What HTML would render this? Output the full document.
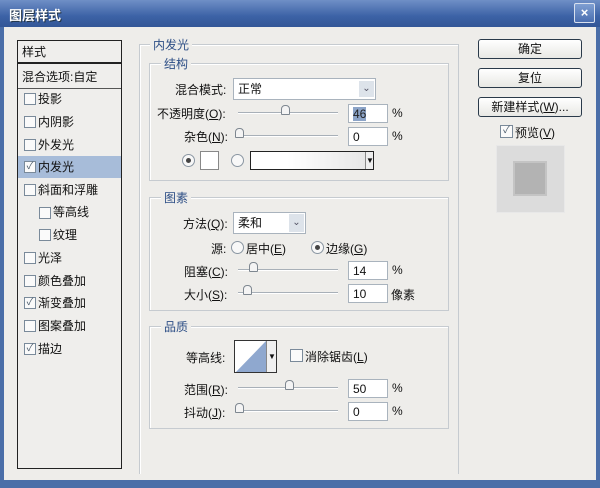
<!DOCTYPE html>
<html><head><meta charset="utf-8"><style>
*{box-sizing:border-box;margin:0;padding:0}
body{width:600px;height:488px;overflow:hidden;background:#4a6ea8;font-family:"Liberation Sans","Noto Sans CJK SC",sans-serif;font-size:12px;color:#111;position:relative}
.a{position:absolute;white-space:nowrap}
#title{left:0;top:0;width:600px;height:27px;background:linear-gradient(#6f8fc6,#3c62a6 60%,#335797)}
#body{left:4px;top:27px;width:592px;height:453px;background:#eeedea}
.cb{position:absolute;width:12px;height:12px;border:1px solid #7a8a9a;background:#fafafa;font-size:10px;line-height:10px;text-align:center;color:#4a5a6a}
.line{position:absolute;border:1px solid #c6cbd0;box-shadow:1px 1px 0 #fff inset}
.leg{position:absolute;background:#eeedea;padding:0 3px;color:#2e4f86;font-size:12px}
.inp{position:absolute;height:19px;border:1px solid #a9b3bd;background:#fff;padding:2px 4px;font-size:12px;line-height:14px}
.sl{position:absolute;height:2px;border-top:1px solid #a8b0b8;border-bottom:1px solid #fff}
.th{position:absolute;width:9px;height:10px;border:1px solid #7e8790;background:#f4f4f4;border-radius:4px 4px 1px 1px}
.rad{position:absolute;width:13px;height:13px;border:1px solid #8a96a2;border-radius:50%;background:#f8f8f8}
.rad.on:after{content:"";position:absolute;left:3px;top:3px;width:5px;height:5px;border-radius:50%;background:#444}
.btn{position:absolute;left:478px;width:104px;height:20px;border:1px solid #2a3a4a;border-radius:3px;background:linear-gradient(#fff,#e8e8e4);text-align:center;line-height:18px;font-size:12px}
.item{position:absolute;left:22px;font-size:12px}
.sep{position:absolute;left:18px;width:103px;height:1px;background:#dcdcdc}
</style></head><body>
<div id="title" class="a"></div>
<div class="a" style="left:9px;top:5px;color:#fff;font-weight:bold;font-size:13px;text-shadow:1px 1px 0 #234">图层样式</div>
<div class="a" style="left:574px;top:3px;width:21px;height:20px;border:1px solid #d8e0ee;border-radius:2px;background:linear-gradient(#7f9fd2,#4a6eb0);color:#fff;font-weight:bold;text-align:center;line-height:18px;font-size:13px">×</div>
<div id="body" class="a"></div>

<!-- left list -->
<div class="a" style="left:17px;top:40px;width:105px;height:429px;border:1px solid #222;background:#efeeec"></div>
<div class="a" style="left:18px;top:62px;width:103px;height:2px;background:#222"></div>
<div class="a" style="left:18px;top:88px;width:103px;height:1px;background:#555"></div>
<div class="a" style="left:18px;top:156px;width:103px;height:22px;background:#a7bcd9"></div>
<div class="item" style="top:43px">样式</div>
<div class="item" style="top:68px">混合选项:自定</div>
<div class="cb" style="left:24px;top:93px"></div><div class="item" style="left:38px;top:90px">投影</div>
<div class="cb" style="left:24px;top:116px"></div><div class="item" style="left:38px;top:113px">内阴影</div>
<div class="cb" style="left:24px;top:139px"></div><div class="item" style="left:38px;top:136px">外发光</div>
<div class="cb" style="left:24px;top:161px">✓</div><div class="item" style="left:38px;top:158px">内发光</div>
<div class="cb" style="left:24px;top:184px"></div><div class="item" style="left:38px;top:181px">斜面和浮雕</div>
<div class="cb" style="left:39px;top:207px"></div><div class="item" style="left:53px;top:203px">等高线</div>
<div class="cb" style="left:39px;top:229px"></div><div class="item" style="left:53px;top:226px">纹理</div>
<div class="cb" style="left:24px;top:252px"></div><div class="item" style="left:38px;top:249px">光泽</div>
<div class="cb" style="left:24px;top:275px"></div><div class="item" style="left:38px;top:272px">颜色叠加</div>
<div class="cb" style="left:24px;top:297px">✓</div><div class="item" style="left:38px;top:294px">渐变叠加</div>
<div class="cb" style="left:24px;top:320px"></div><div class="item" style="left:38px;top:317px">图案叠加</div>
<div class="cb" style="left:24px;top:343px">✓</div><div class="item" style="left:38px;top:340px">描边</div>

<!-- outer group -->
<div class="line" style="left:139px;top:44px;width:320px;height:430px;border-bottom:none"></div>
<div class="leg" style="left:150px;top:36px">内发光</div>
<!-- structure -->
<div class="line" style="left:149px;top:63px;width:300px;height:118px"></div>
<div class="leg" style="left:161px;top:55px">结构</div>
<div class="a" style="left:175px;top:81px">混合模式:</div>
<div class="inp" style="left:233px;top:78px;width:143px;height:22px;padding-top:3px">正常</div>
<div class="a" style="left:359px;top:81px;width:15px;height:16px;background:#dde3ea;color:#556;text-align:center;font-size:10px;line-height:16px">⌄</div>
<div class="a" style="left:157px;top:105px">不透明度(<u>O</u>):</div>
<div class="sl" style="left:238px;top:112px;width:100px"></div><div class="th" style="left:281px;top:105px"></div>
<div class="inp" style="left:348px;top:104px;width:40px"><span style="background:#8ca4c8;color:#222">46</span></div><div class="a" style="left:392px;top:106px">%</div>
<div class="a" style="left:184px;top:128px">杂色(<u>N</u>):</div>
<div class="sl" style="left:238px;top:135px;width:100px"></div><div class="th" style="left:235px;top:128px"></div>
<div class="inp" style="left:348px;top:127px;width:40px">0</div><div class="a" style="left:392px;top:129px">%</div>
<div class="rad on" style="left:182px;top:154px"></div>
<div class="a" style="left:200px;top:151px;width:19px;height:19px;border:1px solid #888;background:#fff"></div>
<div class="rad" style="left:231px;top:154px"></div>
<div class="a" style="left:250px;top:151px;width:124px;height:19px;border:1px solid #222;background:linear-gradient(90deg,#fff 30%,#e4e4e4)"></div>
<div class="a" style="left:365px;top:152px;width:8px;height:17px;background:#eee;border-left:1px solid #888;font-size:8px;text-align:center;line-height:17px">▼</div>
<!-- elements -->
<div class="line" style="left:149px;top:197px;width:300px;height:114px"></div>
<div class="leg" style="left:161px;top:189px">图素</div>
<div class="a" style="left:183px;top:215px">方法(<u>Q</u>):</div>
<div class="inp" style="left:233px;top:212px;width:73px;height:22px;padding-top:3px">柔和</div>
<div class="a" style="left:289px;top:214px;width:15px;height:18px;background:#dde3ea;color:#556;text-align:center;font-size:10px;line-height:18px">⌄</div>
<div class="a" style="left:211px;top:240px">源:</div>
<div class="rad" style="left:231px;top:241px"></div><div class="a" style="left:246px;top:240px">居中(<u>E</u>)</div>
<div class="rad on" style="left:311px;top:241px"></div><div class="a" style="left:326px;top:240px">边缘(<u>G</u>)</div>
<div class="a" style="left:184px;top:263px">阻塞(<u>C</u>):</div>
<div class="sl" style="left:238px;top:269px;width:100px"></div><div class="th" style="left:249px;top:262px"></div>
<div class="inp" style="left:348px;top:261px;width:40px">14</div><div class="a" style="left:392px;top:263px">%</div>
<div class="a" style="left:184px;top:286px">大小(<u>S</u>):</div>
<div class="sl" style="left:238px;top:292px;width:100px"></div><div class="th" style="left:243px;top:285px"></div>
<div class="inp" style="left:348px;top:284px;width:40px">10</div><div class="a" style="left:391px;top:286px">像素</div>
<!-- quality -->
<div class="line" style="left:149px;top:326px;width:300px;height:103px"></div>
<div class="leg" style="left:161px;top:318px">品质</div>
<div class="a" style="left:186px;top:349px">等高线:</div>
<div class="a" style="left:234px;top:340px;width:43px;height:33px;border:1px solid #333;background:#fff;overflow:hidden">
<svg width="43" height="33" style="position:absolute;left:0;top:0"><polygon points="0,32 31,0 31,32" fill="#8fa8cf"/></svg>
<div style="position:absolute;left:31px;top:0;width:11px;height:31px;background:#f0f0f0;border-left:1px solid #888;font-size:8px;text-align:center;line-height:31px">▼</div></div>
<div class="cb" style="left:290px;top:349px;width:13px;height:13px"></div><div class="a" style="left:305px;top:348px">消除锯齿(<u>L</u>)</div>
<div class="a" style="left:184px;top:381px">范围(<u>R</u>):</div>
<div class="sl" style="left:238px;top:387px;width:100px"></div><div class="th" style="left:285px;top:380px"></div>
<div class="inp" style="left:348px;top:379px;width:40px">50</div><div class="a" style="left:392px;top:381px">%</div>
<div class="a" style="left:184px;top:404px">抖动(<u>J</u>):</div>
<div class="sl" style="left:238px;top:410px;width:100px"></div><div class="th" style="left:235px;top:403px"></div>
<div class="inp" style="left:348px;top:402px;width:40px">0</div><div class="a" style="left:392px;top:404px">%</div>

<!-- right -->
<div class="btn" style="top:39px">确定</div>
<div class="btn" style="top:68px">复位</div>
<div class="btn" style="top:97px">新建样式(<u>W</u>)...</div>
<div class="cb" style="left:500px;top:125px;width:13px;height:13px">✓</div><div class="a" style="left:515px;top:124px">预览(<u>V</u>)</div>
<div class="a" style="left:496px;top:145px;width:69px;height:68px;background:#dcdcdc;border:1px solid #e8e8e8"></div>
<div class="a" style="left:513px;top:161px;width:34px;height:35px;background:#b3b3b3;border:2px solid #c4c4c4"></div>
</body></html>
